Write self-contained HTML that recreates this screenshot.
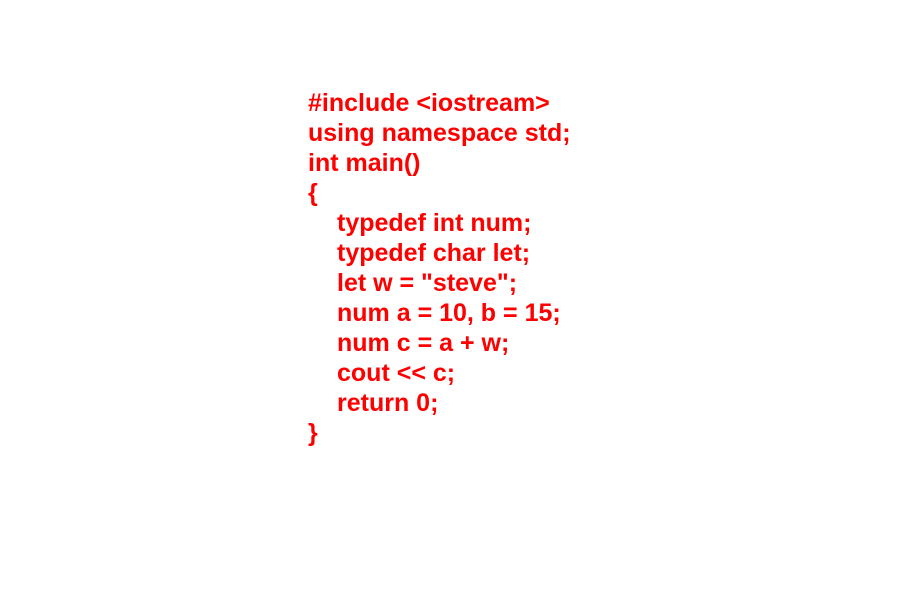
<!DOCTYPE html>
<html><head><style>
body{margin:0;width:900px;height:600px;background:#fff;overflow:hidden}
pre{position:absolute;left:308px;top:88px;margin:0;font-family:"Liberation Sans",sans-serif;font-weight:bold;font-size:25px;line-height:30px;color:#ff0000;white-space:pre}
.i{padding-left:29px}
</style></head><body>
<pre>#include &lt;iostream&gt;
using namespace std;
int main()
{
<span class="i">typedef int num;</span>
<span class="i">typedef char let;</span>
<span class="i">let w = "steve";</span>
<span class="i">num a = 10, b = 15;</span>
<span class="i">num c = a + w;</span>
<span class="i">cout &lt;&lt; c;</span>
<span class="i">return 0;</span>
}</pre>
</body></html>
